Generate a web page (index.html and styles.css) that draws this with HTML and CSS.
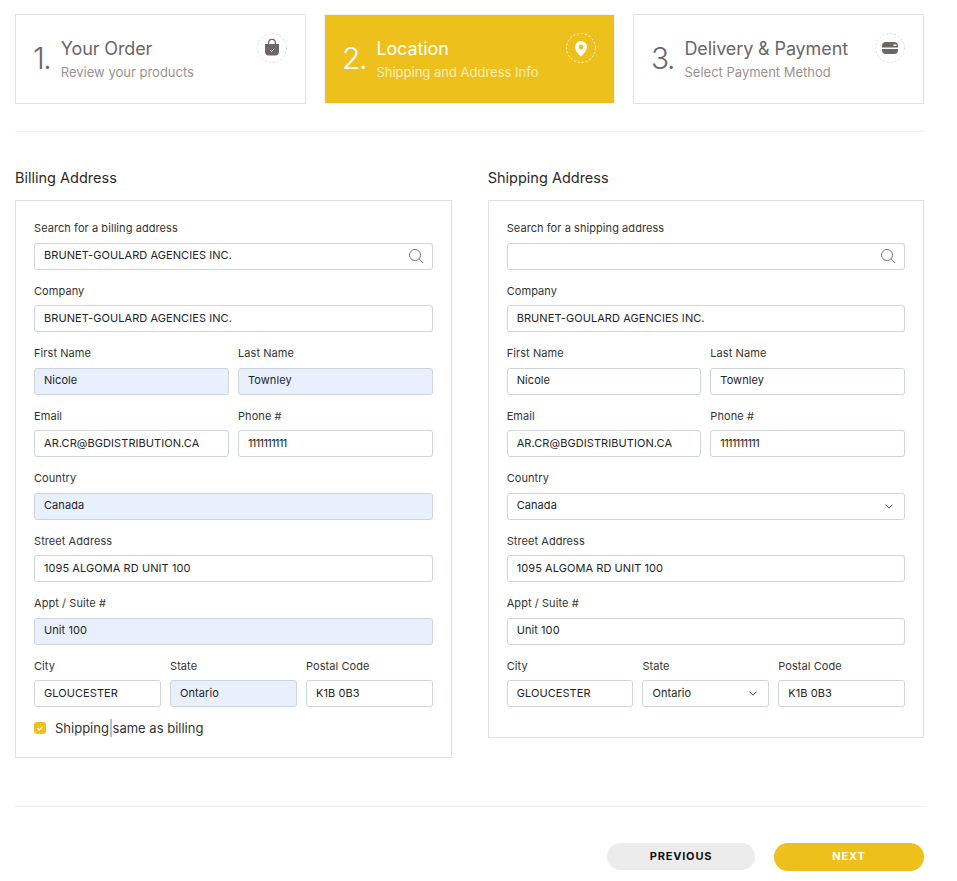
FILE: index.html
```html
<!DOCTYPE html>
<html lang="en">
<head>
<meta charset="utf-8">
<title>Checkout - Location</title>
<link rel="stylesheet" href="styles.css">
</head>
<body>
<main class="page">
  <section class="steps">
    <div class="step">
      <span class="step-num">1.</span>
      <div class="step-text"><div class="step-title">Your Order</div><div class="step-sub">Review your products</div></div>
      <span class="step-icon">
        <svg viewBox="0 0 30 30" width="30" height="30"><circle class="ring" cx="15" cy="15" r="14.5"/>
          <path class="glyph" d="M8 11h14v7.500a4 4 0 0 1-4 4h-6a4 4 0 0 1-4-4z"/>
          <path class="glyph-line" d="M11.600 11.500V9.800a3.400 3.400 0 0 1 6.800 0v1.700"/>
          <path class="glyph-check" d="M13 17l1.500 1.400 2.800-2.600"/></svg>
      </span>
    </div>
    <div class="step step-active">
      <span class="step-num">2.</span>
      <div class="step-text"><div class="step-title">Location</div><div class="step-sub">Shipping and Address Info</div></div>
      <span class="step-icon">
        <svg viewBox="0 0 30 30" width="30" height="30"><circle class="ring" cx="15" cy="15" r="14.500"/>
          <path class="glyph" fill-rule="evenodd" d="M15 8a6 6 0 0 0-6 6c0 3.800 4 7.500 6 9.500 2-2 6-5.700 6-9.500a6 6 0 0 0-6-6zm0 3.600a2.400 2.400 0 1 1 0 4.800 2.400 2.400 0 0 1 0-4.800z"/></svg>
      </span>
    </div>
    <div class="step">
      <span class="step-num">3.</span>
      <div class="step-text"><div class="step-title">Delivery &amp; Payment</div><div class="step-sub">Select Payment Method</div></div>
      <span class="step-icon">
        <svg viewBox="0 0 30 30" width="30" height="30"><circle class="ring" cx="15" cy="15" r="14.500"/>
          <path class="glyph" fill-rule="evenodd" d="M11 9h8a4 4 0 0 1 4 4v1.500H7V13a4 4 0 0 1 4-4zm7.500 2.500v1.500h3v-1.500z"/>
          <path class="glyph" d="M7 16h16v1a4 4 0 0 1-4 4h-8a4 4 0 0 1-4-4z"/></svg>
      </span>
    </div>
  </section>

  <hr class="rule rule-top">

  <section class="columns">
    <div class="column">
      <h2 class="col-title">Billing Address</h2>
      <form class="box">
        <div class="field"><label class="label">Search for a billing address</label>
          <div class="control"><input class="input" value="BRUNET-GOULARD AGENCIES INC.">
            <svg class="search" viewBox="0 0 16 16" width="16" height="16"><circle cx="7" cy="7" r="5.500"/><path d="M11 11l4 4"/></svg></div></div>
        <div class="field"><label class="label">Company</label><input class="input" value="BRUNET-GOULARD AGENCIES INC."></div>
        <div class="row">
          <div class="field"><label class="label">First Name</label><input class="input auto" value="Nicole"></div>
          <div class="field"><label class="label">Last Name</label><input class="input auto" value="Townley"></div>
        </div>
        <div class="row">
          <div class="field"><label class="label">Email</label><input class="input" value="AR.CR@BGDISTRIBUTION.CA"></div>
          <div class="field"><label class="label">Phone #</label><input class="input tight" value="1111111111"></div>
        </div>
        <div class="field"><label class="label">Country</label><input class="input auto" value="Canada"></div>
        <div class="field"><label class="label">Street Address</label><input class="input" value="1095 ALGOMA RD UNIT 100"></div>
        <div class="field"><label class="label">Appt / Suite #</label><input class="input auto" value="Unit 100"></div>
        <div class="row row-3">
          <div class="field"><label class="label">City</label><input class="input" value="GLOUCESTER"></div>
          <div class="field"><label class="label">State</label><input class="input auto" value="Ontario"></div>
          <div class="field"><label class="label">Postal Code</label><input class="input" value="K1B 0B3"></div>
        </div>
        <div class="check-row">
          <span class="check"><svg viewBox="0 0 12 12" width="12" height="12"><path d="M3.500 6.200l1.800 1.700 3.200-3"/></svg></span>
          <span class="check-label">Shipping<span class="caret"></span> same as billing</span>
        </div>
      </form>
    </div>

    <div class="column column-ship">
      <h2 class="col-title">Shipping Address</h2>
      <form class="box box-ship">
        <div class="field"><label class="label">Search for a shipping address</label>
          <div class="control"><input class="input" value="">
            <svg class="search" viewBox="0 0 16 16" width="16" height="16"><circle cx="7" cy="7" r="5.500"/><path d="M11 11l4 4"/></svg></div></div>
        <div class="field"><label class="label">Company</label><input class="input" value="BRUNET-GOULARD AGENCIES INC."></div>
        <div class="row">
          <div class="field"><label class="label">First Name</label><input class="input" value="Nicole"></div>
          <div class="field"><label class="label">Last Name</label><input class="input" value="Townley"></div>
        </div>
        <div class="row">
          <div class="field"><label class="label">Email</label><input class="input" value="AR.CR@BGDISTRIBUTION.CA"></div>
          <div class="field"><label class="label">Phone #</label><input class="input tight" value="1111111111"></div>
        </div>
        <div class="field"><label class="label">Country</label>
          <div class="control"><div class="input select">Canada</div>
            <svg class="chev" viewBox="0 0 8 5" width="8" height="5"><path d="M.5.700L4 4.200 7.500.700"/></svg></div></div>
        <div class="field"><label class="label">Street Address</label><input class="input" value="1095 ALGOMA RD UNIT 100"></div>
        <div class="field"><label class="label">Appt / Suite #</label><input class="input" value="Unit 100"></div>
        <div class="row row-3">
          <div class="field"><label class="label">City</label><input class="input" value="GLOUCESTER"></div>
          <div class="field"><label class="label">State</label>
            <div class="control"><div class="input select">Ontario</div>
              <svg class="chev" viewBox="0 0 8 5" width="8" height="5"><path d="M.5.700L4 4.200 7.500.700"/></svg></div></div>
          <div class="field"><label class="label">Postal Code</label><input class="input" value="K1B 0B3"></div>
        </div>
      </form>
    </div>
  </section>

  <hr class="rule rule-bottom">

  <div class="actions">
    <button class="btn btn-prev" type="button">PREVIOUS</button>
    <button class="btn btn-next" type="button">NEXT</button>
  </div>
</main>
</body>
</html>
```

FILE: styles.css
```css
* { box-sizing: border-box; }
html, body { margin: 0; padding: 0; background: #fff; overflow: hidden; }
body { font-family: Inter, "Open Sans", "Liberation Sans", sans-serif; color: #212529; }
.page { width: 957px; height: 881px; padding: 14px 33px 0 15px; }

.steps { display: grid; grid-template-columns: repeat(3, 291px); column-gap: 18px; }
.step { height: 90px; border: 1px solid #e2e2e2; display: flex; align-items: flex-start; padding: 0 18px 0 17px; position: relative; color: #6d6665; }
.step-num { font-size: 30px; font-weight: 300; line-height: 36px; letter-spacing: -1.500px; margin: 25px 10.500px 0 0; flex: none; }
.step-text { flex: 1; padding-top: 24px; }
.step-title { font-size: 18px; line-height: 20px; letter-spacing: -.12px; }
.step-sub { font-size: 13px; line-height: 16px; margin-top: 4.500px; color: #99918f; }
.step-icon { flex: none; margin-top: 18px; width: 30px; height: 30px; }
.ring { fill: none; stroke: #dcdcdc; stroke-width: 1; stroke-dasharray: 2 2; }
.glyph { fill: #6d6665; }
.glyph-line { fill: none; stroke: #6d6665; stroke-width: 1.200; }
.glyph-check { fill: none; stroke: #fff; stroke-width: 1; }
.step-active { background: #edc01c; border-color: #eef3f8; color: #fff; }
.step-active .step-sub { color: #fbeeb9; }
.step-active .ring { stroke: #fff; }
.step-active .glyph { fill: #fff; }

.rule { border: 0; height: 1px; background: #eee; margin: 0; width: 909px; }
.rule-top { margin-top: 27px; }
.rule-bottom { margin-top: 48px; }

.columns { display: flex; align-items: flex-start; column-gap: 35.700px; margin-top: 36px; }
.column { width: 437px; }
.column-ship { width: 436.300px; }
.col-title { font-size: 14.500px; font-weight: 400; line-height: 20px; margin: 0 0 12px; color: #2a2a2a; }

.box { border: 1px solid #e0e0e0; padding: 17.100px 18px 0; height: 558px; }
.box-ship { height: 538px; }
.field { margin-bottom: 10.750px; min-width: 0; }
.label { display: block; font-size: 11px; letter-spacing: .07px; line-height: 20px; margin-bottom: 4.750px; color: #333; }
.control { position: relative; }
.input { display: block; width: 100%; height: 27px; border: 1px solid #ced4da; border-radius: 3px; padding: 0 9px 2.400px; background: #fff; font: 400 11px/22px Inter, "Open Sans", sans-serif; letter-spacing: .07px; color: #212529; outline: 0; }
.select { padding-top: .300px; }
.tight { letter-spacing: -.6px; }
.auto { background: #e8f0fe; }
.search { position: absolute; right: 9px; top: 5px; fill: none; stroke: #777; stroke-width: 1; }
.chev { position: absolute; right: 12px; top: 11px; fill: none; stroke: #444; stroke-width: 1; }

.row { display: grid; grid-template-columns: 1fr 1fr; column-gap: 9px; }
.row-3 { grid-template-columns: 1fr 1fr 1fr; }

.check-row { display: flex; align-items: center; column-gap: 9px; height: 20px; }
.check { width: 12px; height: 12px; border-radius: 3px; background: #edc01c; flex: none; }
.check svg { display: block; fill: none; stroke: #fff; stroke-width: 1.200; }
.check-label { font-size: 13px; line-height: 18px; color: #333; position: relative; }
.caret { position: absolute; left: 55px; top: 0; width: 2px; height: 18px; background: #bdbdbd; }

.actions { display: flex; justify-content: flex-end; column-gap: 19px; width: 909px; margin-top: 36px; align-items: flex-start; }
.btn { border: 0; border-radius: 14px; font: 700 11px/26px Inter, "Open Sans", sans-serif; letter-spacing: .8px; padding: 0 0 2px; height: 28px; }
.btn-prev { width: 148px; height: 27px; background: #ececec; color: #111; }
.btn-next { width: 150px; background: #edc01c; color: #fff; }
```
